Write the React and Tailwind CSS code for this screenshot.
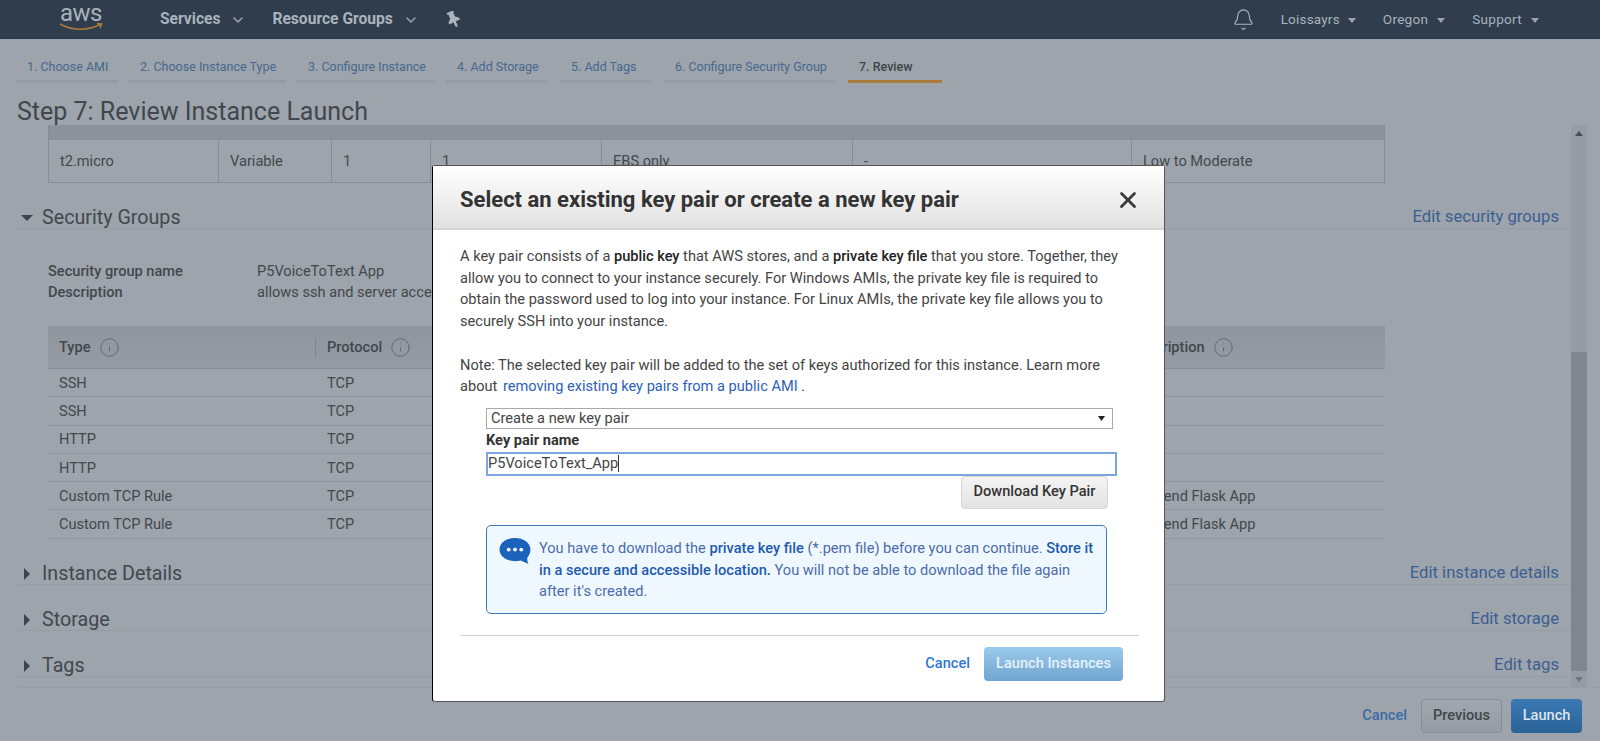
import React from 'react';
import { Bell, ChevronDown, X, Info } from 'lucide-react';

const tabs = [
  ['1. Choose AMI', 'w-[102px]'],
  ['2. Choose Instance Type', 'w-[157px]'],
  ['3. Configure Instance', 'w-[138px]'],
  ['4. Add Storage', 'w-[103px]'],
  ['5. Add Tags', 'w-[93px]'],
  ['6. Configure Security Group', 'w-[173px]'],
];

const rules = [
  ['SSH', 'TCP', ''],
  ['SSH', 'TCP', ''],
  ['HTTP', 'TCP', 'Flask'],
  ['HTTP', 'TCP', 'Flask'],
  ['Custom TCP Rule', 'TCP', 'Frontend Flask App'],
  ['Custom TCP Rule', 'TCP', 'Frontend Flask App'],
];

function Caret({ open }) {
  return (
    <svg width="14" height="14" viewBox="0 0 14 14" className="shrink-0 fill-[#3f454b]">
      {open ? <path d="M1 4h12L7 10z" /> : <path d="M4 1v12l6-6z" />}
    </svg>
  );
}

function SmallCaret() {
  return (
    <svg width="8" height="5" viewBox="0 0 8 5" className="fill-[#9aa4ae]">
      <path d="M0 0h8L4 5z" />
    </svg>
  );
}

function InfoIcon() {
  return <Info size={21} strokeWidth={1} className="text-[#5c636a]" />;
}

function Section({ title, edit, open, children }) {
  return (
    <div>
      <div className="flex h-[46px] items-end justify-between border-b border-[#969da4] pl-[3px] pr-[12px]">
        <div className="flex items-center gap-[8px]">
          <Caret open={open} />
          <span className="text-[19.700px] leading-[20px] text-[#42484e]">{title}</span>
        </div>
        <a className="text-[16.700px] leading-[23px] text-[#3c5f93]">{edit}</a>
      </div>
      {children}
    </div>
  );
}

function Modal() {
  return (
    <div className="absolute left-[432px] top-[165px] flex h-[537px] w-[733px] flex-col rounded-[3px] border border-[#555] border-l-black bg-white">
      <div className="flex h-[64px] shrink-0 items-center justify-between border-b-2 border-[#d4d4d4] bg-gradient-to-b from-white to-[#e1e1e1] pl-[27px] pr-[23px] pt-[6px]">
        <h2 className="text-[22px] font-bold leading-[28px] text-[#333]">Select an existing key pair or create a new key pair</h2>
        <X size={26} strokeWidth={2.600} className="text-[#3a3a3a]" />
      </div>
      <div className="flex flex-1 flex-col px-[27px]">
        <p className="mt-[16px] text-[14.600px] leading-[21.700px] text-[#444]">
          A key pair consists of a <b className="font-medium text-[#222]">public key</b> that AWS stores, and a <b className="font-medium text-[#222]">private key file</b> that you store. Together, they<br />
          allow you to connect to your instance securely. For Windows AMIs, the private key file is required to<br />
          obtain the password used to log into your instance. For Linux AMIs, the private key file allows you to<br />
          securely SSH into your instance.
        </p>
        <p className="mt-[21.700px] text-[14.600px] leading-[21.700px] text-[#444]">
          Note: The selected key pair will be added to the set of keys authorized for this instance. Learn more<br />
          about <a className="ml-[2px] text-[#2d5fb8]">removing existing key pairs from a public AMI</a> .
        </p>
        <div className="ml-[26px] mt-[10px] w-[631px]">
          <div className="flex h-[21px] w-[627px] items-center justify-between border border-[#a9a9a9] pl-[4px] pr-[7px] pt-[1px] text-[14.600px] text-[#444]">
            <span>Create a new key pair</span>
            <svg width="7" height="5" viewBox="0 0 7 5" className="fill-[#222]"><path d="M0 0h7L3.500 5z" /></svg>
          </div>
          <div className="mt-[1px] h-[22px] text-[14.600px] font-bold leading-[20px] text-[#333]">Key pair name</div>
          <div className="flex h-[24px] items-center border-2 border-[#7aa7e0] text-[14.600px] text-[#444]">
            P5VoiceToText_App<span className="h-[17px] w-px bg-[#333]" />
          </div>
          <div className="flex justify-end pr-[9px]">
            <button className="h-[33px] w-[147px] rounded-[4px] border border-[#d6d6d6] bg-gradient-to-b from-[#f4f4f4] to-[#e3e3e3] text-[14.600px] font-medium text-[#333]">Download Key Pair</button>
          </div>
        </div>
        <div className="ml-[26px] mt-[16px] flex h-[89px] w-[621px] gap-[8px] rounded-[5px] border border-[#3f78bb] bg-[#f0f8ff] pl-[12px] pt-[12px] text-[14.600px] leading-[21.700px] text-[#4a6cab]">
          <svg width="32" height="28" viewBox="0 0 32 29" className="shrink-0">
            <path d="M16 0C7 0 0 5 0 12c0 7 7 12 16 12 2 0 4-.3 6-.8L30 27c-1-2-1.500-4-1.200-6.500C30.800 18 32 15 32 12 32 5 25 0 16 0z" fill="#1a62bb" />
            <circle cx="9.500" cy="12" r="2" fill="#fff" /><circle cx="16" cy="12" r="2" fill="#fff" /><circle cx="22.500" cy="12" r="2" fill="#fff" />
          </svg>
          <p>
            You have to download the <b className="font-medium text-[#1d5bb0]">private key file</b> (*.pem file) before you can continue. <b className="font-medium text-[#1d5bb0]">Store it</b><br />
            <b className="font-medium text-[#1d5bb0]">in a secure and accessible location.</b> You will not be able to download the file again<br />
            after it's created.
          </p>
        </div>
        <div className="mt-[21px] w-[679px] border-t border-[#d2d2d2]" />
        <div className="mt-[11px] flex items-center justify-end gap-[14px] pr-[14px]">
          <a className="text-[14.600px] font-medium text-[#2f76d6]">Cancel</a>
          <button className="h-[34px] w-[139px] rounded-[4px] bg-gradient-to-b from-[#9bcaec] to-[#70a5ce] text-[14.600px] font-medium text-[#e6f2fb]">Launch Instances</button>
        </div>
      </div>
    </div>
  );
}

export default function App() {
  return (
    <div className="relative flex h-[741px] w-[1600px] flex-col overflow-hidden bg-[#9da4ab] font-['Roboto',sans-serif] text-[#42484e]">
      <header className="flex h-[39px] shrink-0 items-center border-b border-[#2b3744] bg-[#2f3d4c] pt-[2px] text-[#a9b3bd]">
        <div className="ml-[60px] mr-[58px] flex h-full w-[42px] flex-col items-center pt-[2px]">
          <span className="text-[24px] leading-[18px] tracking-[-.5px]">aws</span>
          <svg width="44" height="8" viewBox="0 0 44 8" fill="none" className="mt-[1px] shrink-0">
            <path d="M1 1c12 7 28 7 41 0M38 .500l4.500.5-1.500 4" stroke="#a8793a" strokeWidth="1.600" />
          </svg>
        </div>
        <span className="text-[15.600px] font-bold">Services</span>
        <ChevronDown size={16} strokeWidth={2.400} className="ml-[10px] mr-[26px] text-[#98a2ac]" />
        <span className="text-[15.600px] font-bold">Resource Groups</span>
        <ChevronDown size={16} strokeWidth={2.400} className="ml-[10px] mr-[27px] text-[#98a2ac]" />
        <svg width="15" height="17" viewBox="0 0 14 16" className="-mt-[2px] fill-[#a9b3bd]">
          <path transform="rotate(-25 7 8)" d="M3.500 0h7v1.500l-1 .5v4l3 2.500V10.500H8.200v4L7 16l-1.200-1.500v-4H1.500V8.500l3-2.500V2l-1-.5z" />
        </svg>
        <Bell size={23} strokeWidth={1.200} className="-mt-[2px] ml-auto mr-[26px]" />
        <span className="-mt-[1px] text-[13.500px] tracking-[.2px]">Loissayrs</span>
        <span className="ml-[8px] mr-[27px]"><SmallCaret /></span>
        <span className="-mt-[1px] text-[13.500px] tracking-[.3px]">Oregon</span>
        <span className="ml-[9px] mr-[27px]"><SmallCaret /></span>
        <span className="-mt-[1px] text-[13.500px] tracking-[.3px]">Support</span>
        <span className="ml-[9px] mr-[61px]"><SmallCaret /></span>
      </header>

      <nav className="ml-[16px] mt-[18px] flex h-[26px] shrink-0 gap-[11px] text-[12.500px]">
        {tabs.map(([label, w]) => (
          <div key={label} className={`${w} border-b-[3px] border-[#959ca4] pl-[11px] leading-[20px] text-[#47688f]`}>{label}</div>
        ))}
        <div className="w-[94px] border-b-[3px] border-[#a87a3c] pl-[11px] font-medium leading-[20px] text-[#3f454b]">7. Review</div>
      </nav>

      <h1 className="ml-[17px] mt-[12px] h-[30px] shrink-0 text-[25px] leading-[34px] text-[#41474d]">Step 7: Review Instance Launch</h1>

      <div className="ml-[17px] flex h-[563px] shrink-0 overflow-hidden border-b border-[#969da4]">
        <main className="w-[1554px] text-[14.600px]">
          <div className="ml-[31px] w-[1337px] border-b border-l border-r border-[#868d95]">
            <div className="h-[15px] bg-[#8b929a]" />
            <div className="grid h-[42px] grid-cols-[170px_113px_99px_171px_251px_279px_1fr] items-center">
              {['t2.micro', 'Variable', '1', '1', 'EBS only', '-', 'Low to Moderate'].map((v, i) => (
                <div key={i} className="flex h-full items-center border-r border-[#868d95] pl-[11px] pt-[2px] last:border-r-0">{v}</div>
              ))}
            </div>
          </div>

          <Section title="Security Groups" edit="Edit security groups" open>
            <div className="ml-[31px] mt-[31.500px] w-[1337px]">
              <div className="grid grid-cols-[209px_1fr] leading-[21.500px]">
                <b className="font-medium">Security group name</b><span>P5VoiceToText App</span>
                <b className="font-medium">Description</b><span>allows ssh and server access</span>
              </div>
              <div className="mt-[22.500px] grid h-[43px] grid-cols-[267px_1fr_266px] items-center border-b border-[#868d95] bg-gradient-to-b from-[#8e959d] to-[#959ca4] pt-[1px] font-medium">
                <div className="flex items-center gap-[8px] pl-[11px]">Type <InfoIcon /></div>
                <div className="flex h-[20px] items-center gap-[8px] border-l border-[#7f868e] pl-[11px]">Protocol <InfoIcon /></div>
                <div className="flex items-center gap-[8px] pl-[11px]">Description <InfoIcon /></div>
              </div>
              {rules.map((r, i) => (
                <div key={i} className="grid h-[28.300px] grid-cols-[267px_1fr_266px] items-center border-b border-[#8d949c] pt-[2px]">
                  <span className="pl-[11px]">{r[0]}</span>
                  <span className="pl-[12px]">{r[1]}</span>
                  <span className="pl-[11px]">{r[2]}</span>
                </div>
              ))}
            </div>
          </Section>

          <Section title="Instance Details" edit="Edit instance details" />
          <Section title="Storage" edit="Edit storage" />
          <Section title="Tags" edit="Edit tags" />
        </main>
        <aside className="flex h-full w-[16px] flex-col bg-[#959ca4]">
          <div className="flex h-[17px] items-center justify-center">
            <svg width="8" height="5" viewBox="0 0 8 5" className="fill-[#474d53]"><path d="M4 0l4 5H0z" /></svg>
          </div>
          <div className="mt-[210px] h-[319px] bg-[#7f868e]" />
          <div className="flex h-[16px] items-center justify-center">
            <svg width="8" height="5" viewBox="0 0 8 5" className="fill-[#6f767d]"><path d="M0 0h8L4 5z" /></svg>
          </div>
        </aside>
      </div>

      <footer className="flex flex-1 items-center justify-end gap-[14px] pr-[18px] pt-[3px]">
        <a className="text-[14.600px] font-medium text-[#3c6ba6]">Cancel</a>
        <button className="h-[34px] w-[81px] rounded-[4px] border border-[#868d95] bg-gradient-to-b from-[#a0a7ae] to-[#959ca4] text-[14.600px] font-medium text-[#42484e]">Previous</button>
        <button className="-ml-[5px] h-[34px] w-[71px] rounded-[4px] bg-gradient-to-b from-[#3b79b3] to-[#2b6297] text-[14.600px] font-medium text-[#dbe5ee]">Launch</button>
      </footer>

      <Modal />
    </div>
  );
}
